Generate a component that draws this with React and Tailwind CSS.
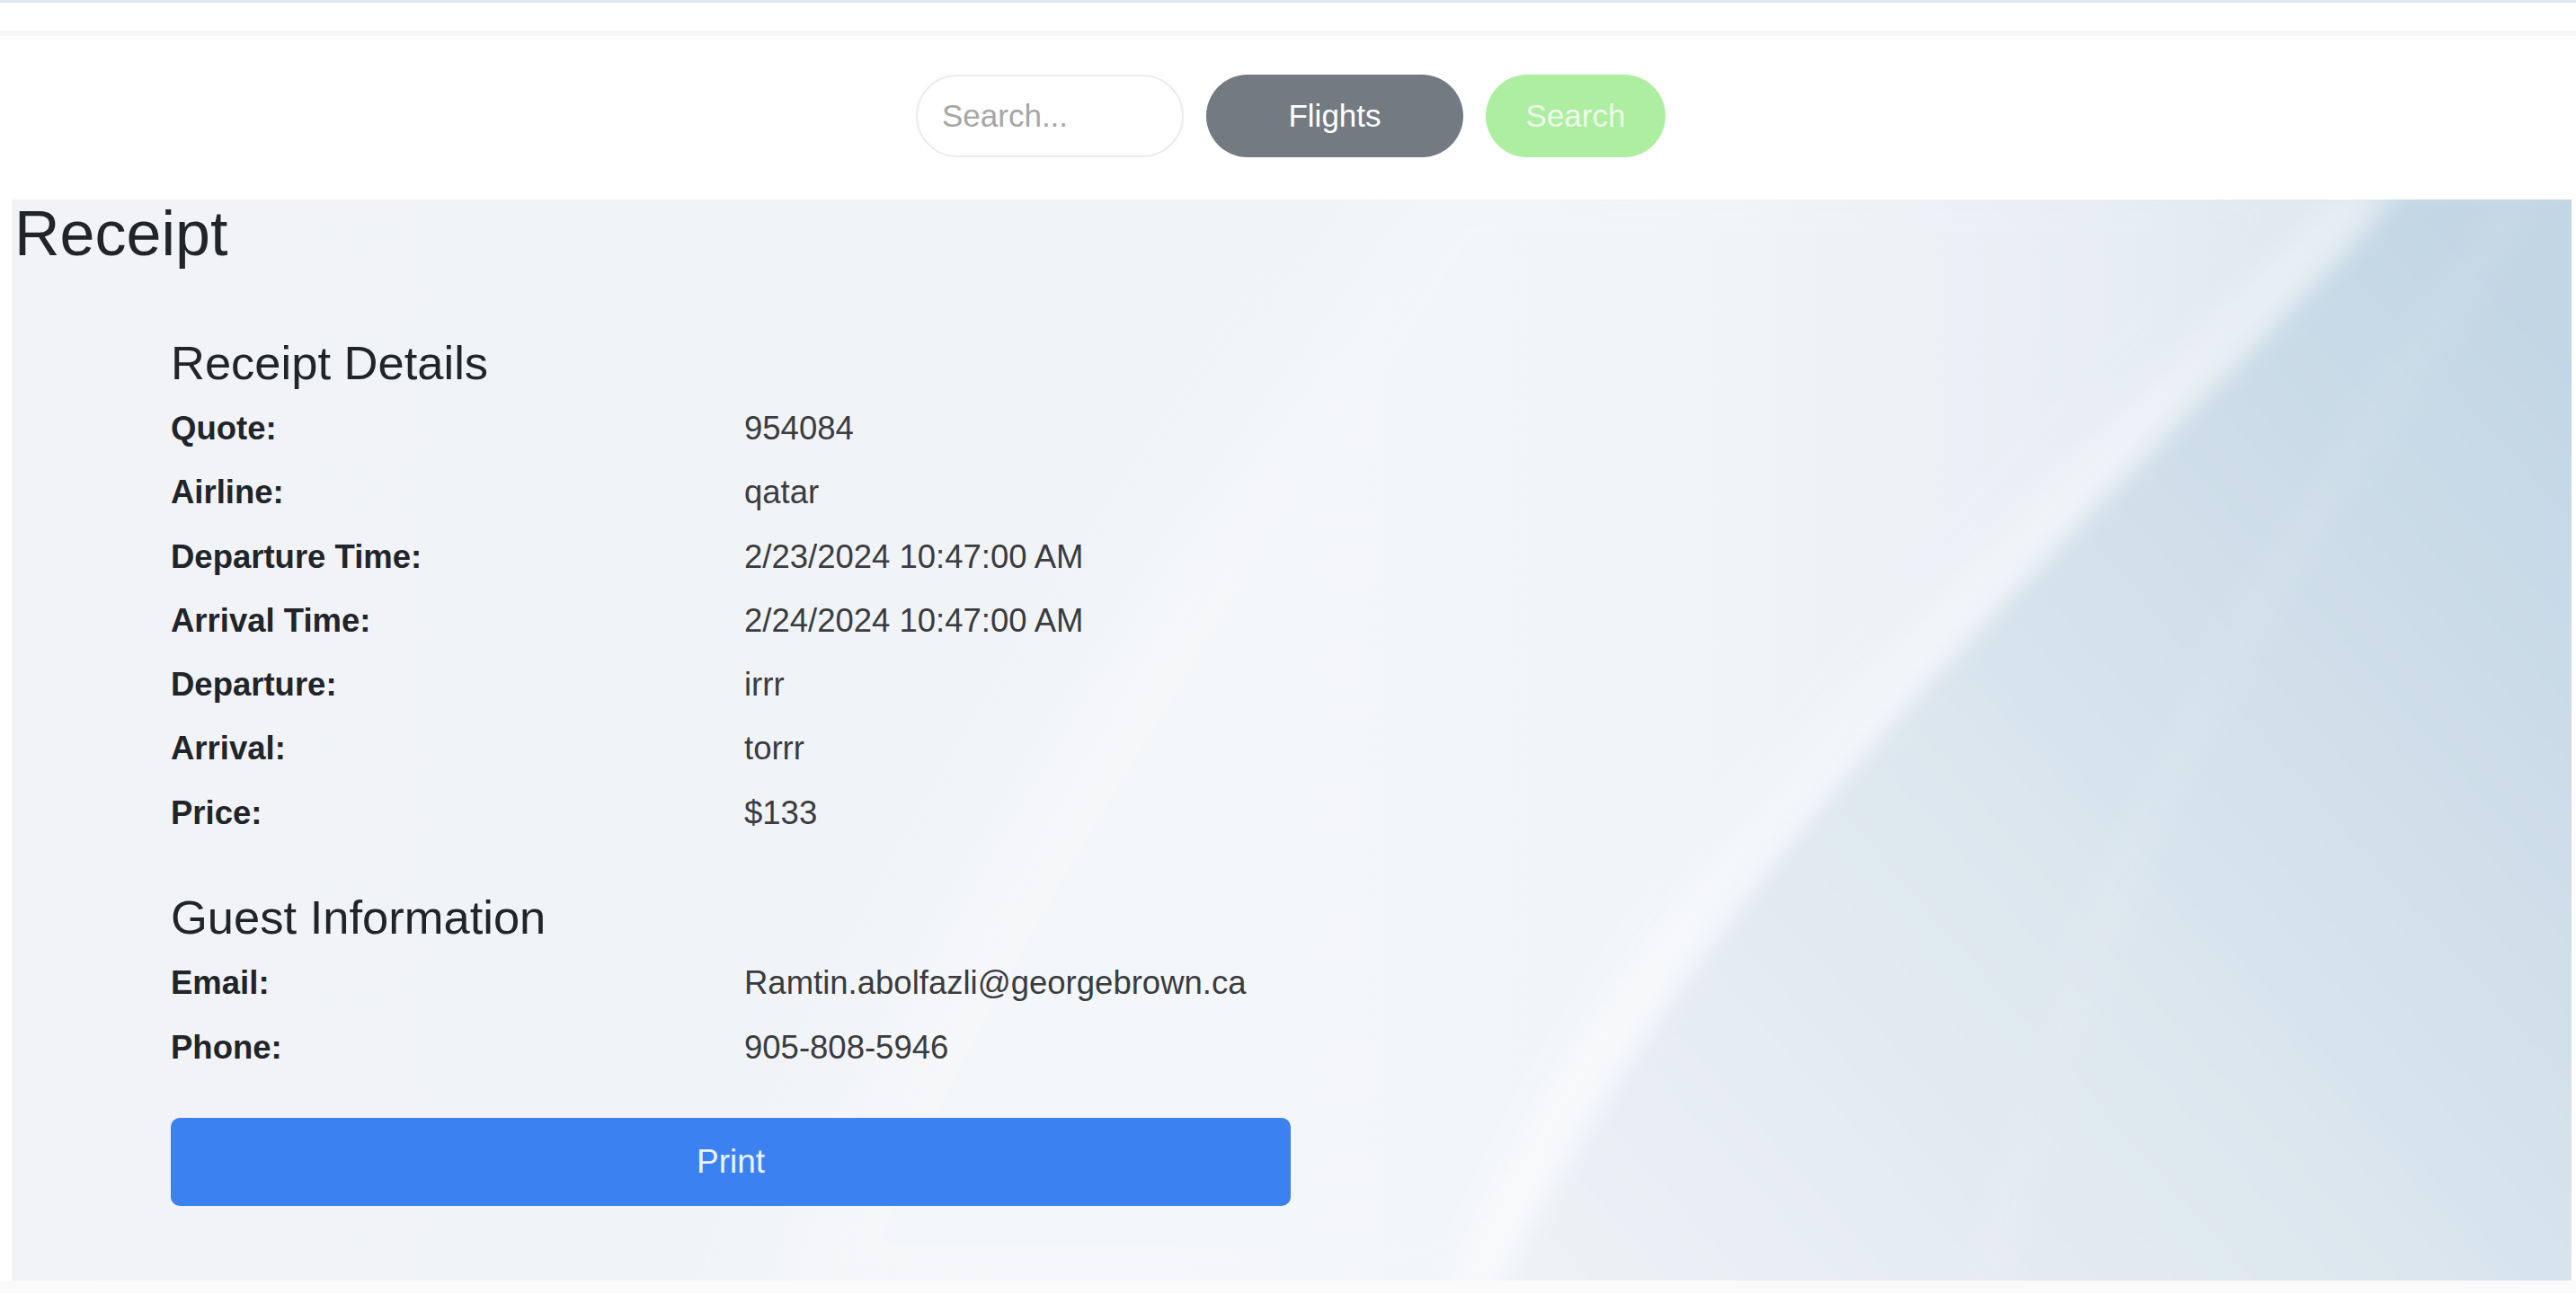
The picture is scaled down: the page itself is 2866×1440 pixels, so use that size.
import { useState } from "react";

const details = [
    ["Quote:", "954084"],
    ["Airline:", "qatar"],
    ["Departure Time:", "2/23/2024 10:47:00 AM"],
    ["Arrival Time:", "2/24/2024 10:47:00 AM"],
    ["Departure:", "irrr"],
    ["Arrival:", "torrr"],
    ["Price:", "$133"],
];

const guest = [
    ["Email:", "Ramtin.abolfazli@georgebrown.ca"],
    ["Phone:", "905-808-5946"],
];

function PanelBackground() {
    return (
        <svg className="absolute inset-0 h-full w-full" viewBox="0 0 2848 1203" preserveAspectRatio="none" aria-hidden="true">
            <defs>
                <linearGradient id="base" x1="0" y1="0" x2="2848" y2="0" gradientUnits="userSpaceOnUse">
                    <stop offset="0" stopColor="#f1f3f6" />
                    <stop offset="0.45" stopColor="#f1f4f7" />
                    <stop offset="0.64" stopColor="#eef2f6" />
                    <stop offset="0.8" stopColor="#e0e9f0" />
                    <stop offset="1" stopColor="#c6d9e5" />
                </linearGradient>
                <linearGradient id="blue" x1="1650" y1="1203" x2="2848" y2="150" gradientUnits="userSpaceOnUse">
                    <stop offset="0" stopColor="#eef2f6" />
                    <stop offset="0.45" stopColor="#dde7ef" />
                    <stop offset="1" stopColor="#c2d6e4" />
                </linearGradient>
                <filter id="soft" x="-20%" y="-20%" width="140%" height="140%">
                    <feGaussianBlur stdDeviation="18" />
                </filter>
                <filter id="wide" x="-20%" y="-20%" width="140%" height="140%">
                    <feGaussianBlur stdDeviation="40" />
                </filter>
                <filter id="edge" x="-10%" y="-10%" width="120%" height="120%">
                    <feGaussianBlur stdDeviation="8" />
                </filter>
            </defs>
            <rect width="2848" height="1203" fill="url(#base)" />
            <path d="M1564,-60 L2655,-60 C2380,300 1850,750 1660,1260 L820,1260 C1000,750 1350,300 1564,-60 Z" fill="#ffffff" opacity="0.28" filter="url(#wide)" />
            <path d="M2655,0 L2900,0 L2900,1260 L1640,1260 C1850,750 2380,300 2655,0 Z" fill="url(#blue)" filter="url(#edge)" />
            <path d="M2620,-10 C2340,300 1810,750 1625,1220" fill="none" stroke="#ffffff" strokeWidth="46" opacity="0.4" filter="url(#soft)" />
            <path d="M2790,0 C2600,300 2350,600 2200,1203" fill="none" stroke="#ffffff" strokeWidth="30" opacity="0.1" filter="url(#soft)" />
        </svg>
    );
}

function Row({ label, value, tall }) {
    return (
        <div className={tall ? "grid grid-cols-[638px_1fr] leading-[72px]" : "grid grid-cols-[638px_1fr] leading-[71.3px]"}>
            <span className="font-bold text-[#212529]">{label}</span>
            <span className="text-[#3a3c3f]">{value}</span>
        </div>
    );
}

export default function App() {
    const [query, setQuery] = useState("");

    return (
        <div className="min-h-screen bg-white font-['Liberation_Sans',Arial,sans-serif]">
            <div className="h-[34px] border-t-[3px] border-[#dbe8f2] bg-white" />
            <div className="h-[6px] bg-gradient-to-b from-[#f4f4f4] to-[#f8f8f8]" />

            <div className="mt-[43px] flex justify-center gap-[25px] pl-[6px]">
                <input
                    value={query}
                    onChange={e => setQuery(e.target.value)}
                    placeholder="Search..."
                    className="h-[92px] w-[298px] rounded-full border-2 border-[#ececec] bg-white pl-[27px] text-[35px] text-[#333] placeholder:text-[#a6a6a6] focus:outline-none"
                />
                <button className="h-[92px] w-[286px] rounded-full bg-[#747a82] text-[35px] text-white">
                    Flights
                </button>
                <button className="h-[92px] w-[200px] rounded-full bg-[#adeea0] text-[35px] text-white/80">
                    Search
                </button>
            </div>

            <div className="relative mt-[47px] mr-[5px] ml-[13px] h-[1203px] overflow-hidden">
                <PanelBackground />
                <div className="relative">
                    <h1 className="pt-[3px] pl-[3px] text-[70px] leading-[70px] text-[#212529]">Receipt</h1>

                    <div className="w-[1246px] pl-[177px] box-content">
                        <h2 className="mt-[71px] text-[52.5px] leading-[75px] text-[#212529]">Receipt Details</h2>
                        <div className="text-[36.5px]">
                            {details.map(([label, value]) => <Row key={label} label={label} value={value} />)}
                        </div>

                        <h2 className="mt-[43px] text-[52.5px] leading-[75px] text-[#212529]">Guest Information</h2>
                        <div className="text-[36.5px]">
                            {guest.map(([label, value]) => <Row key={label} label={label} value={value} tall />)}
                        </div>

                        <button className="mt-[42px] h-[98px] w-[1246px] rounded-[10px] bg-[#3b82f0] text-[37px] text-white/90">
                            Print
                        </button>
                    </div>
                </div>
            </div>
            <div className="h-[14px] bg-[#fafafa]" />
        </div>
    );
}
